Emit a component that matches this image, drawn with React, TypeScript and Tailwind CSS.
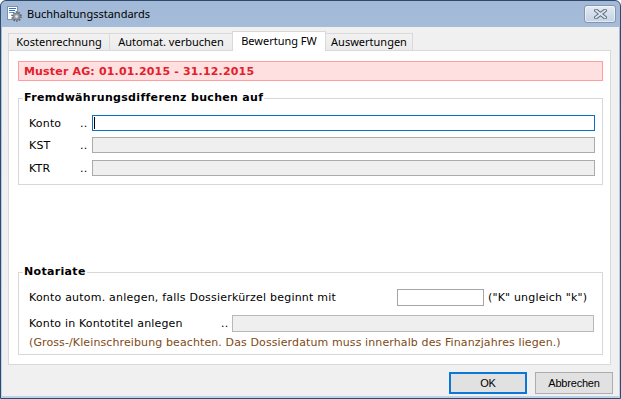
import React from "react";

const content = "font-['DejaVu_Sans',sans-serif] text-[11px] tracking-[0.17px]";

function AppIcon() {
  return (
    <svg width="16" height="16" viewBox="0 0 16 16">
      <rect x="1.5" y="0.5" width="10" height="13" fill="#ffffff" stroke="#7f90a8" />
      <rect x="3" y="2" width="7" height="1" fill="#2f74cc" />
      <rect x="3" y="4" width="6" height="1" fill="#2f74cc" />
      <rect x="3" y="6" width="4" height="1" fill="#5d97da" />
      <circle cx="10.5" cy="10.5" r="4.3" fill="none" stroke="#5f646c" strokeWidth="2" strokeDasharray="1.5 1.2" />
      <circle cx="10.5" cy="10.5" r="3.3" fill="#9ca2aa" stroke="#6c727a" strokeWidth="0.8" />
      <circle cx="10.5" cy="10.5" r="1.2" fill="#e8eaee" />
    </svg>
  );
}

function CloseButton() {
  return (
    <div className="w-[32px] h-[18px] rounded-[3px] border border-[#8595ab] bg-gradient-to-b from-[#e4ebf4] to-[#c3d2e5] shadow-[inset_0_0_0_1px_rgba(255,255,255,0.55)] flex items-center justify-center">
      <svg width="13" height="10" viewBox="0 0 13 10">
        <path d="M2 1.5 L11 8.5 M11 1.5 L2 8.5" stroke="#5c6a7d" strokeWidth="3.8" strokeLinecap="square" />
        <path d="M2 1.5 L11 8.5 M11 1.5 L2 8.5" stroke="#dfe5ec" strokeWidth="1.8" strokeLinecap="square" />
      </svg>
    </div>
  );
}

function Tab({ label, width, selected }: { label: string; width: string; selected?: boolean }) {
  if (selected) {
    return (
      <div
        className={`${width} h-[20px] -ml-px mb-[-1px] relative z-10 bg-white border border-b-0 border-[#d9d9d9] flex items-center justify-center font-['Noto_Sans',sans-serif] text-[11px] text-black`}
      >
        {label}
      </div>
    );
  }
  return (
    <div
      className={`${width} h-[17px] -ml-px first:ml-0 bg-gradient-to-b from-[#f2f2f2] to-[#ebebeb] border border-b-0 border-[#d9d9d9] flex items-center justify-center font-['Noto_Sans',sans-serif] text-[11px] text-black`}
    >
      {label}
    </div>
  );
}

function Legend({ text }: { text: string }) {
  return (
    <span className="absolute left-[4px] top-[-8px] bg-white px-[1px] leading-[13px] font-bold text-black font-['DejaVu_Sans',sans-serif] text-[11px] tracking-[0.32px]">
      {text}
    </span>
  );
}

function FwRow({ label, active, className }: { label: string; active?: boolean; className?: string }) {
  return (
    <div className={`flex items-center h-[16px] ${className ?? ""}`}>
      <span className="w-[51px] text-black leading-[13px]">{label}</span>
      <span className="w-[12px] text-black leading-[13px]">..</span>
      {active ? (
        <div className="flex-1 h-[16px] border border-[#0a6ecb] bg-white flex items-center">
          <span className="ml-[1px] w-px h-[12px] bg-black" />
        </div>
      ) : (
        <div className="flex-1 h-[16px] border border-[#ababab] bg-[#efefef]" />
      )}
    </div>
  );
}

export default function App() {
  return (
    <div className="w-[621px] h-[399px] bg-white">
      <div className="w-[621px] h-[399px] flex flex-col border border-[#2f4b6b] rounded-t-[6px] overflow-hidden bg-gradient-to-b from-[#a2bad7] via-[#b4cae4] to-[#bcd2ea]">
        {/* Title bar */}
        <div className="h-[26px] shrink-0 flex items-start">
          <div className="ml-[5px] mt-[5px] w-[16px] h-[16px]">
            <AppIcon />
          </div>
          <span className="ml-[5px] mt-[5px] leading-[16px] font-['Noto_Sans',sans-serif] text-[11px] text-black">
            Buchhaltungsstandards
          </span>
          <div className="ml-auto mr-[4px] mt-[4px]">
            <CloseButton />
          </div>
        </div>

        {/* Client area */}
        <div className="flex-1 mx-[1px] mb-[2px] bg-[#f0f0f0] flex flex-col">
          {/* Tabs */}
          <div className="pt-[4px] pl-[6px] flex items-end">
            <Tab label="Kostenrechnung" width="w-[102px]" />
            <Tab label="Automat. verbuchen" width="w-[124px]" />
            <Tab label="Bewertung FW" width="w-[94px]" selected />
            <Tab label="Auswertungen" width="w-[88px]" />
          </div>

          {/* Panel */}
          <div className={`ml-[6px] w-[603px] h-[315px] border border-[#d9d9d9] bg-white flex flex-col ${content}`}>
            <div className="ml-[9px] mt-[10px] w-[585px] h-[20px] border border-[#ff9e9e] bg-[#ffe0e1] flex items-center pl-[5px]">
              <span className="font-bold text-[#e3202b] leading-[13px]">Muster AG: 01.01.2015 - 31.12.2015</span>
            </div>

            {/* Group 1 */}
            <div className="relative ml-[9px] mt-[17px] w-[585px] h-[87px] border border-[#d8d8d8] pt-[16px] pb-[8px] pl-[10px] pr-[7px] flex flex-col">
              <Legend text="Fremdwährungsdifferenz buchen auf" />
              <FwRow label="Konto" active />
              <FwRow label="KST" className="mt-[6px]" />
              <FwRow label="KTR" className="mt-[7px]" />
            </div>

            {/* Group 2 */}
            <div className="relative ml-[9px] mt-[87px] w-[585px] h-[83px] border border-[#d8d8d8] pt-[16px] pb-[5px] pl-[10px] pr-[7px] flex flex-col">
              <Legend text="Notariate" />
              <div className="flex items-center h-[17px]">
                <span className="w-[368px] text-black leading-[13px] tracking-[0.21px]">
                  Konto autom. anlegen, falls Dossierkürzel beginnt mit
                </span>
                <div className="w-[87px] h-[17px] border border-[#a6a6a6] bg-white" />
                <span className="ml-[4px] text-black leading-[13px]">("K" ungleich "k")</span>
              </div>
              <div className="mt-[9px] flex items-center h-[17px]">
                <span className="w-[192px] text-black leading-[13px]">Konto in Kontotitel anlegen</span>
                <span className="w-[11px] text-black leading-[13px]">..</span>
                <div className="w-[362px] h-[17px] border border-[#b8b8b8] bg-[#efefef]" />
              </div>
              <div className="mt-[4px] h-[13px] leading-[13px] text-[#7e4a16] tracking-[0.11px] whitespace-nowrap">
                (Gross-/Kleinschreibung beachten. Das Dossierdatum muss innerhalb des Finanzjahres liegen.)
              </div>
            </div>
          </div>

          {/* Buttons */}
          <div className="mt-[7px] pr-[6px] flex justify-end gap-[8px] font-['Liberation_Sans',sans-serif] text-[11px] tracking-[-0.2px] text-black">
            <div className="w-[78px] h-[22px] border-2 border-[#0a78d7] bg-[#e1e1e1] flex items-center justify-center">
              OK
            </div>
            <div className="w-[78px] h-[22px] border border-[#adadad] bg-[#e1e1e1] flex items-center justify-center">
              Abbrechen
            </div>
          </div>
        </div>
      </div>
    </div>
  );
}
